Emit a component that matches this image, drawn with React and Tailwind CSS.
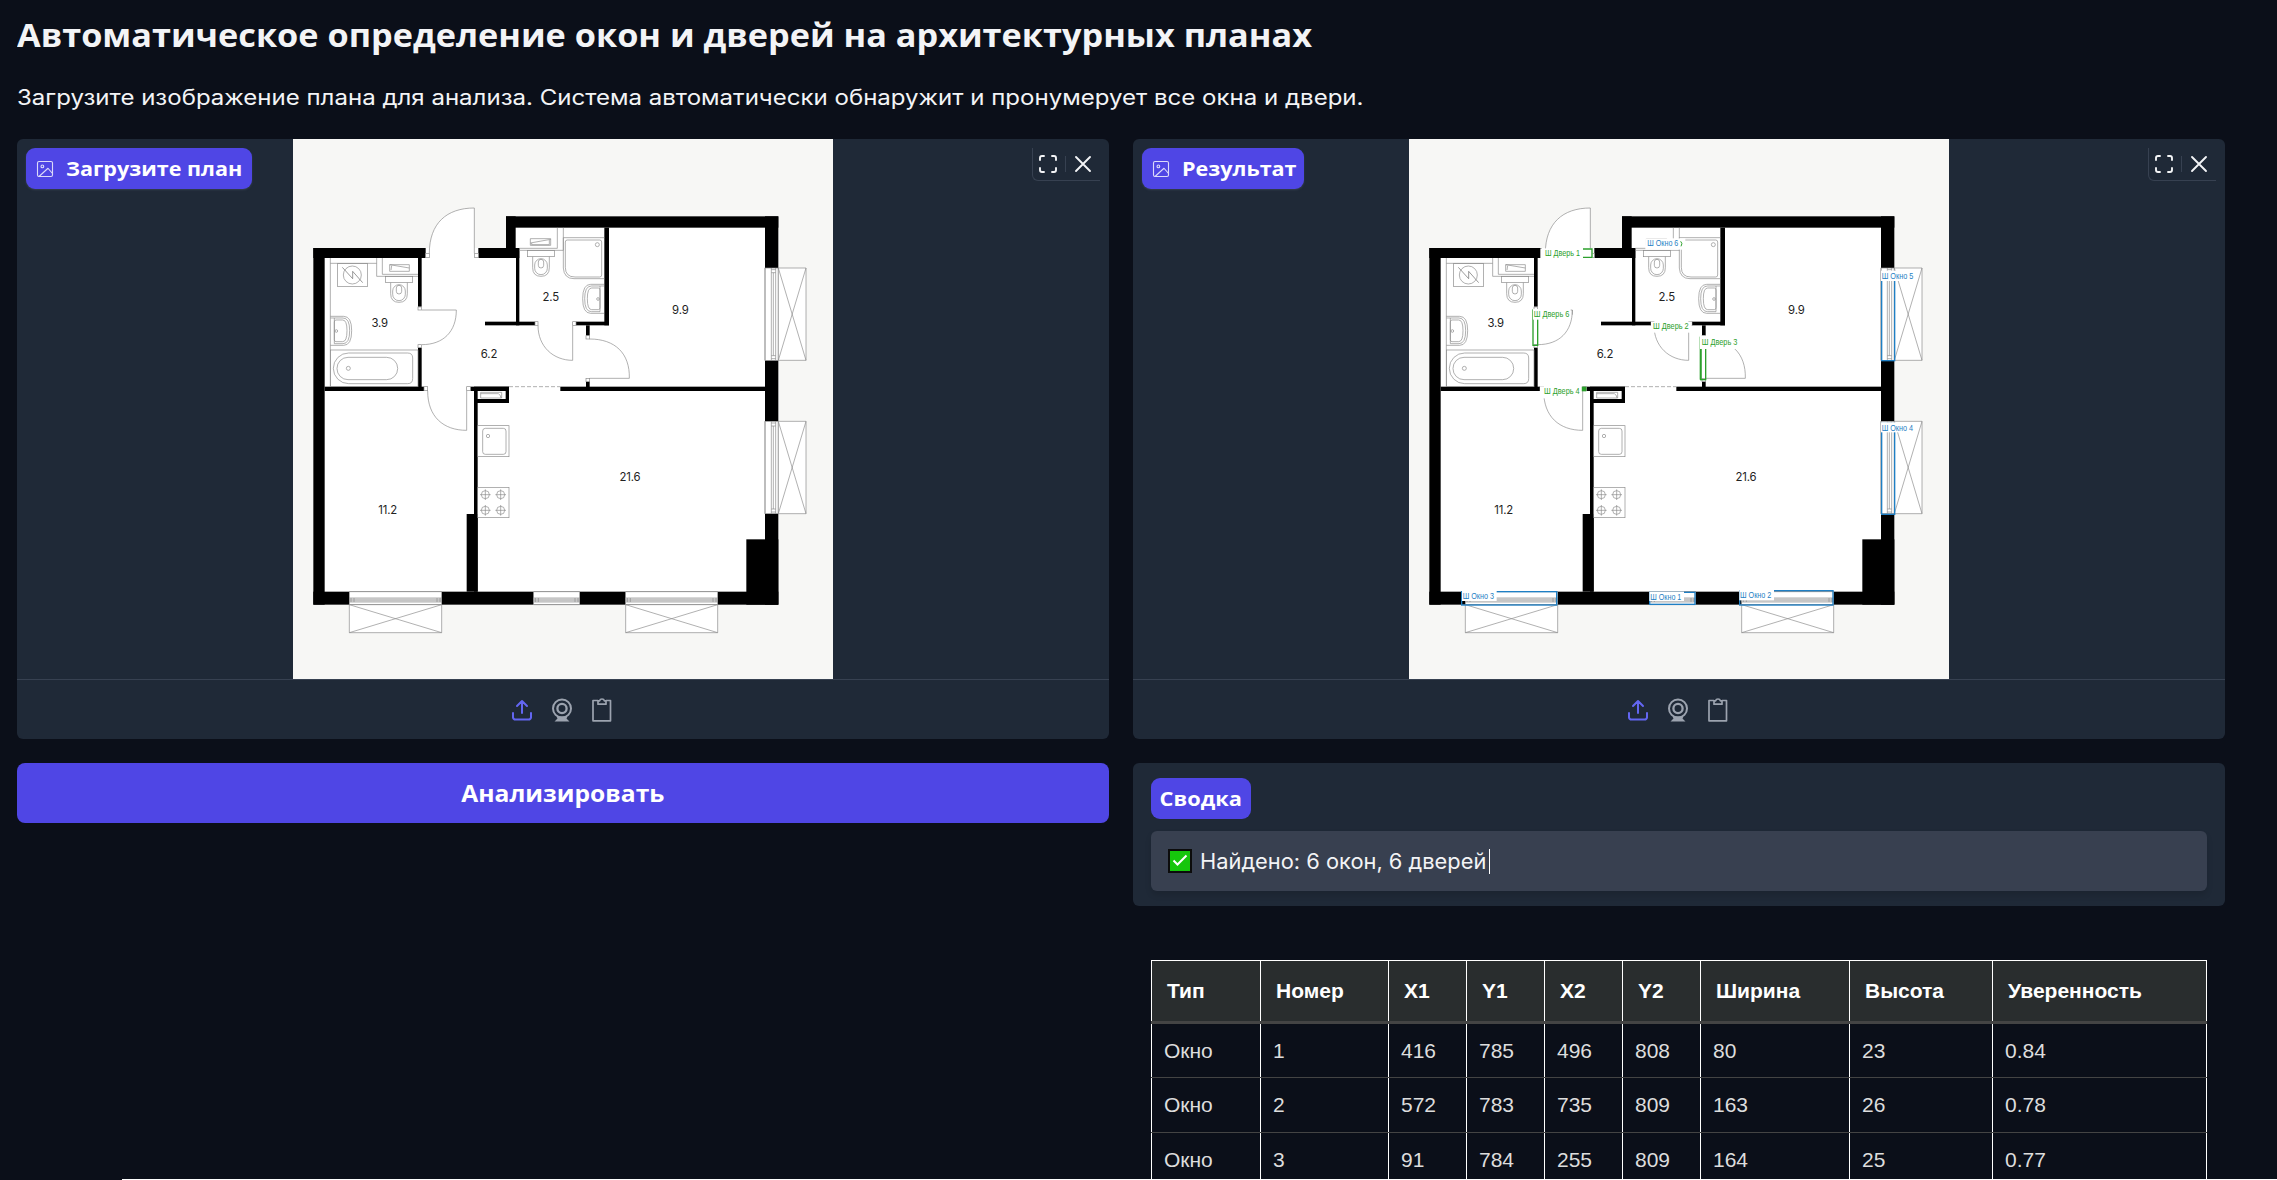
const COLUMNS = ["Тип", "Номер", "X1", "Y1", "X2", "Y2", "Ширина", "Высота", "Уверенность"];
const ROWS = [
  ["Окно", "1", "416", "785", "496", "808", "80", "23", "0.84"],
  ["Окно", "2", "572", "783", "735", "809", "163", "26", "0.78"],
  ["Окно", "3", "91", "784", "255", "809", "164", "25", "0.77"],
];
const WIDTHS = [109, 128, 78, 78, 78, 78, 149, 143, 214];

// Filled wall segments: x1, y1, x2, y2
const WALLS = [
  [70, 204, 104, 1274], [70, 204, 407, 234], [565, 204, 688, 234], [648, 109, 677, 234],
  [678, 204, 688, 436], [648, 109, 1465, 143], [1425, 109, 1465, 264], [1425, 541, 1465, 724],
  [1425, 1001, 1465, 1274], [1369, 1078, 1465, 1274], [70, 1235, 178, 1274], [455, 1235, 731, 1274],
  [869, 1235, 1007, 1274], [1283, 1235, 1465, 1274], [384, 234, 395, 380], [384, 503, 395, 633],
  [104, 620, 402, 633], [541, 620, 657, 633], [811, 620, 1425, 633], [585, 425, 735, 436],
  [858, 425, 957, 436], [943, 143, 957, 436], [888, 436, 899, 467], [888, 605, 899, 633],
  [552, 620, 657, 669], [552, 633, 563, 1235], [530, 1002, 563, 1235],
];

const JAMBS = [
  [407, 220, 11, 13], [554, 220, 11, 13], [384, 381, 10, 9], [384, 494, 10, 9], [735, 425, 9, 11],
  [848, 425, 10, 11], [888, 467, 11, 10], [888, 595, 11, 10], [402, 620, 11, 12], [530, 620, 11, 12],
];

const ROOMS = [
  ["3.9", 269, 441], ["6.2", 597, 533], ["2.5", 782, 362], ["9.9", 1171, 402], ["11.2", 293, 1002], ["21.6", 1020, 903],
];

function BottomWindow({ x1, x2, balcony }) {
  return (
    <g>
      <rect x={x1} y="1235" width={x2 - x1} height="39" fill="#fff" />
      <rect x={x1} y="1254" width={x2 - x1} height="12" fill="#e4e4e4" stroke="#8a8a8a" strokeWidth="2" />
      <path d={`M${x1} 1235H${x2}M${x1} 1260H${x2}M${x1} 1274H${x2}M${x1 + 5} 1254v12M${x1 + 14} 1254v12M${x2 - 5} 1254v12M${x2 - 14} 1254v12`} stroke="#8a8a8a" strokeWidth="2" />
      {balcony && <path d={`M${x1} 1274H${x2}V1358H${x1}ZL${x2} 1358M${x2} 1274L${x1} 1358`} fill="#fff" />}
    </g>
  );
}

function SideWindow({ y1 }) {
  const y2 = y1 + 277;
  return (
    <g>
      <rect x="1425" y={y1} width="40" height={y2 - y1} fill="#fff" />
      <path d={`M1425 ${y1}V${y2}M1444 ${y1}V${y2}M1450 ${y1 + 14}V${y2 - 14}M1457 ${y1}V${y2}M1465 ${y1}V${y2}M1444 ${y1 + 5}h13M1444 ${y1 + 14}h13M1444 ${y2 - 5}h13M1444 ${y2 - 14}h13`} />
      <path d={`M1465 ${y1}H1548V${y2}H1465ZL1548 ${y2}M1548 ${y1}L1465 ${y2}`} fill="#fff" />
    </g>
  );
}

function Toilet({ x, y }) {
  return (
    <g transform={`translate(${x} ${y})`}>
      <rect x="0" y="0" width="82" height="19" />
      <path d="M16 19V52Q16 78 41 78Q66 78 66 52V19" />
      <rect x="22" y="25" width="38" height="48" rx="19" />
      <rect x="33" y="27" width="16" height="26" rx="8" />
    </g>
  );
}

function Sink() {
  return (
    <g>
      <path d="M0 0H40Q64 0 64 43Q64 87 40 87H0" />
      <path d="M0 5H38Q58 5 58 43Q58 82 38 82H12V5" />
      <path d="M17 11H37Q50 11 50 43Q50 76 37 76H17Q12 76 12 70V17Q12 11 17 11Z" />
      <circle cx="18" cy="44" r="4" />
    </g>
  );
}

function Burner({ cx, cy }) {
  return (
    <g>
      <circle cx={cx} cy={cy} r="12" />
      <path d={`M${cx - 16} ${cy}h32M${cx} ${cy - 16}v32`} />
    </g>
  );
}

function Tag({ x, y, w, bg, color, children }) {
  return (
    <g>
      <rect x={bg[0]} y={bg[1]} width={bg[2] - bg[0]} height={bg[3] - bg[1]} fill="#fff" />
      <text x={x} y={y} textLength={w} lengthAdjust="spacingAndGlyphs" fill={color} fontSize="25" fontFamily="Liberation Sans, Arial, sans-serif">{children}</text>
    </g>
  );
}

function Detections() {
  const g = "#2ca02c";
  const b = "#1f7fc4";
  return (
    <g fill="none">
      <rect x="531" y="205" width="29" height="29" fill="#fff" />
      <path d="M531 207H558V232H531" stroke={g} strokeWidth="4" />
      <rect x="381" y="390" width="14" height="106" stroke={g} strokeWidth="4" />
      <rect x="884" y="470" width="15" height="129" stroke={g} strokeWidth="4" />
      <path d="M884 470V599" stroke={g} strokeWidth="6" />
      <rect x="527" y="620" width="14" height="14" fill={g} />
      <g stroke={b} strokeWidth="4">
        <rect x="1427" y="277" width="39" height="265" />
        <rect x="1427" y="730" width="39" height="273" />
        <rect x="167" y="1235" width="285" height="40" />
        <rect x="731" y="1237" width="136" height="36" />
        <rect x="1001" y="1232" width="280" height="43" />
      </g>
      <Tag x={417} y={227} w={105} bg={[403, 205, 531, 235]} color={g}>Ш Дверь 1</Tag>
      <Tag x={383} y={410} w={107} bg={[381, 387, 494, 419]} color={g}>Ш Дверь 6</Tag>
      <path d="M499 390v14" stroke="#8a8a8a" strokeWidth="2" />
      <Tag x={741} y={447} w={107} bg={[735, 425, 857, 458]} color={g}>Ш Дверь 2</Tag>
      <Tag x={887} y={496} w={107} bg={[882, 467, 1000, 507]} color={g}>Ш Дверь 3</Tag>
      <Tag x={414} y={643} w={107} bg={[402, 619, 526, 655]} color={g}>Ш Дверь 4</Tag>
      <Tag x={724} y={199} w={93} bg={[718, 175, 838, 209]} color={b}>Ш Окно 6</Tag>
      <path d="M824 184Q831 190 825 199" stroke={g} strokeWidth="3" />
      <Tag x={1427} y={297} w={95} bg={[1425, 272, 1526, 303]} color={b}>Ш Окно 5</Tag>
      <Tag x={1427} y={752} w={94} bg={[1425, 727, 1525, 757]} color={b}>Ш Окно 4</Tag>
      <Tag x={170} y={1257} w={94} bg={[168, 1233, 272, 1263]} color={b}>Ш Окно 3</Tag>
      <Tag x={733} y={1259} w={93} bg={[730, 1235, 834, 1263]} color={b}>Ш Окно 1</Tag>
      <Tag x={1002} y={1255} w={94} bg={[1000, 1230, 1104, 1261]} color={b}>Ш Окно 2</Tag>
    </g>
  );
}

function FloorPlan({ detected }) {
  return (
    <svg className="size-[540px]" viewBox="9 -123 1620 1620">
      <rect x="9" y="-123" width="1620" height="1620" fill="#f7f7f5" />
      <path d="M70 204H648V109H1465V1274H70Z" fill="#fff" />
      <g fill="#000">
        {WALLS.map(([a, b, c, d], i) => (
          <rect key={i} x={a} y={b} width={c - a} height={d - b} />
        ))}
      </g>
      <rect x="563" y="633" width="84" height="24" fill="#fff" />
      <g fill="none" stroke="#8a8a8a" strokeWidth="2">
        <BottomWindow x1={178} x2={455} balcony />
        <BottomWindow x1={731} x2={869} />
        <BottomWindow x1={1007} x2={1283} balcony />
        <SideWindow y1={264} />
        <SideWindow y1={724} />

        <path d="M553 220V84C470 84 418 130 418 220" fill="#fff" />
        <path d="M395 390H499C499 455 460 494 395 494" />
        <path d="M848 436V541C790 541 744 500 744 436" />
        <path d="M899 595H1018C1020 520 975 477 899 477" />
        <path d="M530 633V751C460 751 413 710 413 633" />
        <path d="M657 620H811" strokeDasharray="12 6" />
        {JAMBS.map(([x, y, w, h], i) => (
          <rect key={i} x={x} y={y} width={w} height={h} fill="#fff" />
        ))}

        <path d="M121 234V620M121 250H260M260 234V289H384M277 234V283H384" />
        <path d="M299 254V274H358V254ZL358 264M305 257L303 270" />
        <rect x="143" y="250" width="89" height="70" />
        <circle cx="187" cy="285" r="27" />
        <path d="M157 262L188 296V274L218 308" stroke="#666" />
        <Toilet x={286} y={289} />
        <g transform="translate(121 409)"><Sink /></g>
        <rect x="121" y="510" width="263" height="110" />
        <path d="M176 519H353Q368 519 368 534V596Q368 611 353 611H176A46 46 0 0 1 176 519Z" />
        <rect x="141" y="532" width="182" height="67" rx="33" />
        <circle cx="175" cy="565" r="6" />

        <path d="M688 205H802V143M688 211H820V143M820 173H943" />
        <path d="M721 176H782V196H721ZM721 189L782 178M725 189V194H778V180" />
        <Toilet x={712} y={211} />
        <path d="M820 173V264Q822 296 852 296H943" />
        <path d="M832 180H929Q935 180 935 186V285Q935 291 929 291H855Q826 291 826 262V186Q826 180 832 180Z" />
        <circle cx="922" cy="194" r="6" />
        <g transform="translate(942 313) scale(-1 1)"><Sink /></g>

        <path d="M572 637H635V654H572ZM572 641H625Q632 644 633 654" />
        <rect x="563" y="737" width="94" height="93" />
        <rect x="578" y="745" width="70" height="78" rx="8" />
        <circle cx="594" cy="768" r="5" />
        <rect x="563" y="922" width="94" height="91" />
        <Burner cx={586} cy={944} />
        <Burner cx={632} cy={944} />
        <Burner cx={586} cy={991} />
        <Burner cx={632} cy={991} />
      </g>
      <g fill="#222" fontSize="34" fontFamily="Inter, sans-serif" textAnchor="middle" letterSpacing="-0.5">
        {ROOMS.map(([t, x, y]) => (
          <text key={t} x={x} y={y}>{t}</text>
        ))}
      </g>
      {detected && <Detections />}
    </svg>
  );
}

function ImageIcon() {
  return (
    <svg className="size-[18px] opacity-80" viewBox="0 0 24 24" fill="none" stroke="currentColor" strokeWidth="1.5" strokeLinecap="round" strokeLinejoin="round">
      <rect x="2" y="2" width="20" height="20" rx="2" />
      <circle cx="8.5" cy="8.5" r="1.8" />
      <path d="M22 18l-6-7L4 22" />
    </svg>
  );
}

function ExpandIcon() {
  return (
    <svg className="size-6" viewBox="0 0 24 24" fill="none" stroke="currentColor" strokeWidth="1.9" strokeLinecap="round" strokeLinejoin="round">
      <path d="M8 4H6a2 2 0 0 0-2 2v2M16 4h2a2 2 0 0 1 2 2v2M4 16v2a2 2 0 0 0 2 2h2M20 16v2a2 2 0 0 1-2 2h-2" />
    </svg>
  );
}

function CloseIcon() {
  return (
    <svg className="size-6" viewBox="0 0 24 24" fill="none" stroke="currentColor" strokeWidth="1.9" strokeLinecap="round">
      <path d="M5 5l14 14M19 5L5 19" />
    </svg>
  );
}

function UploadIcon() {
  return (
    <svg className="h-6 w-6 text-[#6366f1]" viewBox="0 0 24 24" fill="none" stroke="currentColor" strokeWidth="2" strokeLinecap="round" strokeLinejoin="round">
      <path d="M3 15v4.500a2.500 2.500 0 0 0 2.500 2h13a2.500 2.500 0 0 0 2.500-2V15M7 8l5-5 5 5M12 3v12" />
    </svg>
  );
}

function WebcamIcon() {
  return (
    <svg className="h-6 w-6" viewBox="0 0 24 24" fill="none" stroke="currentColor" strokeWidth="2">
      <circle cx="12" cy="10.500" r="9" />
      <circle cx="12" cy="10.500" r="4.600" strokeWidth="2.300" />
      <path d="M6.500 18.500h11l-1 2 3 3h-15l3-3z" fill="currentColor" stroke="none" />
    </svg>
  );
}

function ClipboardIcon() {
  return (
    <svg className="h-6 w-6" viewBox="0 0 24 24" fill="none" stroke="currentColor" strokeWidth="1.700" strokeLinejoin="round">
      <path d="M8 2.500H3V22.800H20.500V2.500H16" />
      <path d="M8 6.200V2.800H9.600A2.500 2.500 0 0 1 14.400 2.800H16V6.200Z" />
    </svg>
  );
}

function ImagePanel({ label, labelWidth, detected }) {
  return (
    <section className="relative flex h-[600px] flex-col overflow-hidden rounded-md bg-[#1f2937]">
      <div className="flex h-[540px] justify-center">
        <FloorPlan detected={detected} />
      </div>
      <div className="flex flex-1 items-center justify-center gap-4 border-t border-[#374151] pr-[2px] text-[#9ca3af]">
        <UploadIcon />
        <WebcamIcon />
        <ClipboardIcon />
      </div>
      <div className={`absolute left-[9px] top-[9px] flex h-[41px] items-center rounded-[9px] bg-[#4f46e5] pl-[10px] text-white shadow-[0_1px_2px_#374151] ${labelWidth}`}>
        <ImageIcon />
        <span className="ml-[12px] origin-left scale-x-[1.078] whitespace-nowrap text-[20px] font-bold">{label}</span>
      </div>
      <div className="absolute right-[9px] top-[9px] flex h-[33px] w-[68px] items-center rounded-bl-md border-b border-l border-[#374151] pl-[3px] text-[#f3f4f6]">
        <ExpandIcon />
        <div className="ml-[5px] mr-[5px] h-4 w-px bg-[#374151]" />
        <CloseIcon />
      </div>
    </section>
  );
}

export default function App() {
  return (
    <div className="flex h-[1180px] flex-col overflow-hidden bg-[#0b0f19] font-['Open_Sans',sans-serif]">
      <main className="min-h-0 flex-1 overflow-hidden pl-[17px] pr-[52px]">
        <h1 className="mt-[12px] h-[45px] w-fit origin-left scale-x-[1.0705] whitespace-nowrap text-[32px] font-bold leading-[45px] text-[#f3f4f6]">
          Автоматическое определение окон и дверей на архитектурных планах
        </h1>
        <p className="mt-[25px] h-[32px] w-fit origin-left scale-x-[1.1446] whitespace-nowrap font-['Inter',sans-serif] text-[21px] leading-[32px] text-[#f3f4f6]">
          Загрузите изображение плана для анализа. Система автоматически обнаружит и пронумерует все окна и двери.
        </p>
        <div className="mt-[25px] grid grid-cols-[1092px_1092px] gap-6">
          <div className="flex flex-col gap-6">
            <ImagePanel label="Загрузите план" labelWidth="w-[226px]" />
            <button className="h-[60px] rounded-lg bg-[#4f46e5] text-[23px] font-bold text-white">
              <span className="inline-block scale-x-[1.0705]">Анализировать</span>
            </button>
          </div>
          <div className="flex flex-col">
            <ImagePanel label="Результат" labelWidth="w-[162px]" detected />
            <section className="mt-6 flex h-[143px] flex-col rounded-md bg-[#1f2937] px-[18px] pt-[15px]">
              <div className="flex h-[41px] w-[100px] items-center justify-center rounded-[9px] bg-[#4f46e5] text-white">
                <span className="scale-x-[1.09] text-[20px] font-bold">Сводка</span>
              </div>
              <div className="mt-3 flex h-[60px] items-center rounded-md bg-[#384050] pl-[17px] shadow-[0_4px_6px_rgba(0,0,0,0.12)]">
                <svg className="size-6" viewBox="0 0 24 24">
                  <rect width="24" height="24" fill="#0c0c0c" />
                  <rect x="2" y="2" width="20" height="20" fill="#16c60c" />
                  <path d="M5.500 11.500l4 4 9-9" fill="none" stroke="#fff" strokeWidth="2" />
                </svg>
                <div className="ml-[8px] h-[25px] w-[290px] border-r border-white">
                  <span className="inline-block origin-left scale-x-[1.04] whitespace-nowrap font-['Inter',sans-serif] text-[21px] leading-[25px] text-[#f3f4f6]">
                    Найдено: 6 окон, 6 дверей
                  </span>
                </div>
              </div>
            </section>
            <table className="ml-[18px] mt-[54px] w-[1056px] table-fixed border-collapse text-left font-['Liberation_Sans',Arial,sans-serif] text-[21px]">
              <colgroup>
                {WIDTHS.map((w, i) => (
                  <col key={i} style={{ width: w }} />
                ))}
              </colgroup>
              <thead>
                <tr className="h-[62px] bg-[#292d2e]">
                  {COLUMNS.map((c) => (
                    <th key={c} className="border border-b-[3px] border-white border-b-[#444] px-[15px] font-bold text-white">{c}</th>
                  ))}
                </tr>
              </thead>
              <tbody>
                {ROWS.map((row) => (
                  <tr key={row[1]} className="h-[55px]">
                    {row.map((v, i) => (
                      <td key={i} className="border border-white border-b-[#444] px-[12px] text-[#ddd]">{v}</td>
                    ))}
                  </tr>
                ))}
              </tbody>
            </table>
          </div>
        </div>
      </main>
      <div className="ml-[122px] h-px shrink-0 bg-white" />
    </div>
  );
}
